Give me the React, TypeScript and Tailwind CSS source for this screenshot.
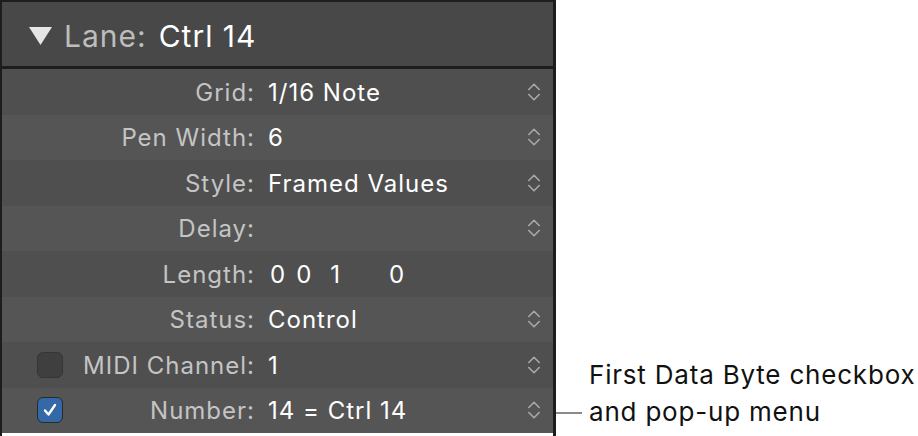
import React from 'react';

const rows = [
  { label: 'Grid:', value: '1/16 Note', arrows: true },
  { label: 'Pen Width:', value: '6', arrows: true },
  { label: 'Style:', value: 'Framed Values', arrows: true },
  { label: 'Delay:', value: '', arrows: true },
  { label: 'Length:', value: 'length', arrows: false },
  { label: 'Status:', value: 'Control', arrows: true },
  { label: 'MIDI Channel:', value: '1', arrows: true, check: 'off' },
  { label: 'Number:', value: '14 = Ctrl 14', arrows: true, check: 'on' },
];

function Stepper() {
  return (
    <svg width="14" height="22" viewBox="0 0 14 22" className="text-[#a9a9a9]">
      <path d="M1.8 8.5 L7 3.3 L12.2 8.5" fill="none" stroke="currentColor" strokeWidth="1.6" strokeLinecap="round" strokeLinejoin="round" />
      <path d="M1.8 13.5 L7 18.7 L12.2 13.5" fill="none" stroke="currentColor" strokeWidth="1.6" strokeLinecap="round" strokeLinejoin="round" />
    </svg>
  );
}

function Checkbox({ on }: { on: boolean }) {
  if (!on) {
    return <div className="w-[26px] h-[26px] rounded-[6px] bg-[#3f3f3f] border border-[#363636]" />;
  }
  return (
    <div className="w-[26px] h-[26px] rounded-[6px] bg-[#3568a6] border border-[#2a2a2a] flex items-center justify-center">
      <svg width="16" height="16" viewBox="0 0 16 16">
        <path d="M3 8.5 L6.5 12.5 L13 3" fill="none" stroke="white" strokeWidth="2.4" strokeLinecap="round" strokeLinejoin="round" />
      </svg>
    </div>
  );
}

export default function App() {
  return (
    <div className="w-[918px] h-[436px] bg-white flex overflow-hidden" style={{ fontFamily: 'Inter, "Liberation Sans", sans-serif' }}>
      {/* Inspector panel */}
      <div className="w-[556px] h-[440px] shrink-0 flex flex-col border-l-2 border-t-2 border-r-[3px] border-[#1d1d1d]">
        <div className="h-[67px] shrink-0 bg-[#484848] border-b-[3px] border-[#1d1d1d] flex items-center pl-[27px]">
          <svg width="23" height="18" viewBox="0 0 23 18" className="mr-[12px] mt-[4px]">
            <path d="M0 0 H23 L11.5 18 Z" fill="#e6e6e6" />
          </svg>
          <span className="text-[30px] tracking-[1px] text-[#bdbdbd] leading-none mt-[4px]">Lane:</span>
          <span className="text-[30px] tracking-[1px] text-white leading-none ml-[12px] mt-[4px]">Ctrl 14</span>
        </div>
        {rows.map((r, i) => (
          <div
            key={r.label}
            className={`h-[45.5px] shrink-0 flex items-center ${i % 2 === 0 ? 'bg-[#4f4f4f]' : 'bg-[#555555]'}`}
          >
            <div className="w-[35px] shrink-0" />
            <div className="w-[26px] shrink-0 flex items-center">
              {r.check && <Checkbox on={r.check === 'on'} />}
            </div>
            <div className="w-[192px] shrink-0 text-right text-[24px] tracking-[1px] text-[#c4c4c4] pt-[2px]">{r.label}</div>
            <div className="flex-1 pl-[13px] text-[24px] tracking-[1px] text-white pt-[2px]">
              {r.value === 'length' ? (
                <span className="flex">
                  <span className="ml-[2px]">0</span>
                  <span className="ml-[10px]">0</span>
                  <span className="ml-[18px]">1</span>
                  <span className="ml-[48px]">0</span>
                </span>
              ) : (
                r.value
              )}
            </div>
            <div className="w-[40px] shrink-0 flex items-center justify-start pl-[14px]">
              {r.arrows && <Stepper />}
            </div>
          </div>
        ))}
      </div>

      {/* Callout */}
      <div className="flex-1 flex flex-col justify-end pb-[6px]">
        <div className="flex items-end">
          <div className="w-[26px] h-[2px] bg-[#8a8a8a] mb-[16px] shrink-0" />
          <div className="ml-[7px] text-[26px] tracking-[0.8px] leading-[37px] text-[#111] whitespace-nowrap">
            First Data Byte checkbox
            <br />
            and pop-up menu
          </div>
        </div>
      </div>
    </div>
  );
}
